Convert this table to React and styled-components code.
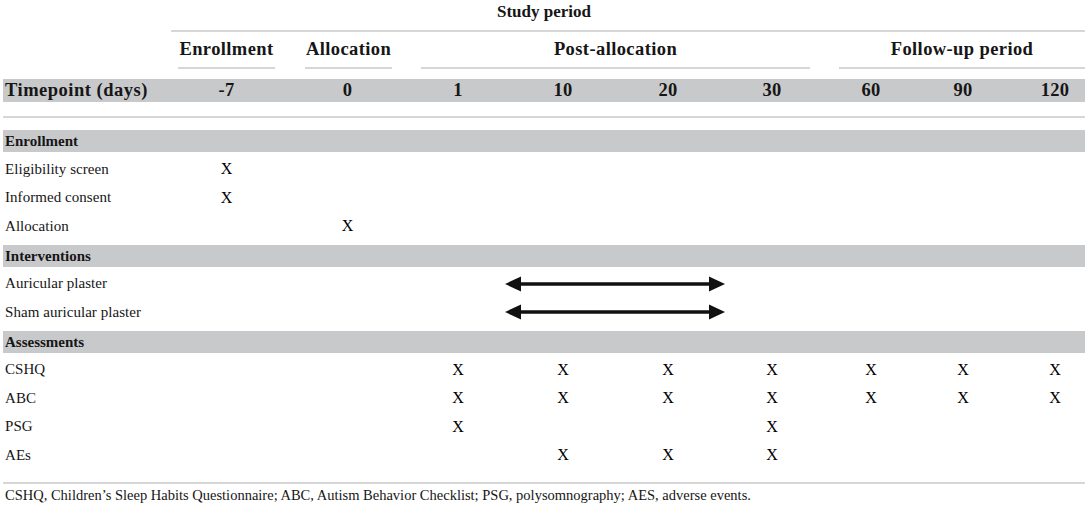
import React from 'react';
import styled, { createGlobalStyle } from 'styled-components';

const COLS = '161px 125px 117px 104px 106px 104px 104px 94px 90px 94px';

const Global = createGlobalStyle`
  html, body { margin: 0; padding: 0; background: #ffffff; }
  body {
    font-family: "Liberation Serif", "Times New Roman", serif;
    color: #161616;
  }
`;

const Page = styled.div`
  width: 1091px;
  height: 511px;
  box-sizing: border-box;
  padding: 0 6px 0 3px;
  overflow: hidden;
`;

const HeadGrid = styled.div`
  display: grid;
  grid-template-columns: ${COLS};
  grid-template-rows: 32px 37px;
`;

const StudyTitle = styled.div`
  grid-column: 1 / -1;
  grid-row: 1;
  margin-right: 17px;
  text-align: center;
  font-weight: 700;
  font-size: 17px;
  line-height: 24px;
`;

const StudyRule = styled.div`
  grid-column: 2 / -1;
  grid-row: 1;
  align-self: end;
  margin: 0 17px 0 7px;
  border-top: 2px solid #d6d6d6;
`;

const PhaseCell = styled.div`
  grid-row: 2;
  grid-column: ${(p) => p.$col};
  margin: ${(p) => p.$margin};
  border-bottom: 2px solid #d6d6d6;
  text-align: center;
  font-weight: 700;
  font-size: 18.5px;
  letter-spacing: 0.4px;
  line-height: 35px;
  white-space: nowrap;
`;

const TimeBar = styled.div`
  display: grid;
  grid-template-columns: ${COLS};
  margin-top: 10px;
  height: 23px;
  align-items: center;
  background: #c8c9cb;
  font-weight: 700;
  font-size: 18.5px;
`;

const TimeLabel = styled.div`
  padding-left: 2px;
  white-space: nowrap;
  letter-spacing: 0.5px;
`;

const TimeValue = styled.div`
  text-align: center;
  letter-spacing: 0.3px;
`;

const Rule = styled.div`
  height: 2px;
  background: #d6d6d6;
  margin-top: ${(p) => p.$top}px;
`;

const Body = styled.div`
  margin-top: 12px;
  padding-bottom: 8px;
`;

const SectionBar = styled.div`
  height: 22px;
  line-height: 22px;
  background: #c8c9cb;
  padding-left: 2px;
  font-weight: 700;
  font-size: 15px;
`;

const SectionRows = styled.div`
  padding: 3px 0 4px;
`;

const Row = styled.div`
  display: grid;
  grid-template-columns: ${COLS};
  height: 28.5px;
  align-items: center;
  font-size: 15px;
  letter-spacing: 0.05px;
`;

const RowLabel = styled.div`
  padding-left: 2px;
  white-space: nowrap;
`;

const Mark = styled.div`
  grid-column: ${(p) => p.$col + 2};
  grid-row: 1;
  text-align: center;
  font-size: 16px;
  color: #000;
`;

const ArrowCell = styled.div`
  grid-column: 4 / span 4;
  grid-row: 1;
  display: flex;
  justify-content: center;
  align-items: center;
`;

const Footnote = styled.div`
  margin-top: 2px;
  padding-left: 2px;
  font-size: 14.5px;
  line-height: 18px;
  white-space: nowrap;
`;

const TIMEPOINTS = ['-7', '0', '1', '10', '20', '30', '60', '90', '120'];

const SECTIONS = [
  {
    title: 'Enrollment',
    rows: [
      { label: 'Eligibility screen', marks: [0] },
      { label: 'Informed consent', marks: [0] },
      { label: 'Allocation', marks: [1] },
    ],
  },
  {
    title: 'Interventions',
    rows: [
      { label: 'Auricular plaster', arrow: true },
      { label: 'Sham auricular plaster', arrow: true },
    ],
  },
  {
    title: 'Assessments',
    rows: [
      { label: 'CSHQ', marks: [2, 3, 4, 5, 6, 7, 8] },
      { label: 'ABC', marks: [2, 3, 4, 5, 6, 7, 8] },
      { label: 'PSG', marks: [2, 5] },
      { label: 'AEs', marks: [3, 4, 5] },
    ],
  },
];

const Arrow = () => (
  <svg width="220" height="16" viewBox="0 0 220 16" aria-hidden="true">
    <line x1="12" y1="8" x2="208" y2="8" stroke="#111" strokeWidth="3.5" />
    <polygon points="0,8 16,0.5 16,15.5" fill="#111" />
    <polygon points="220,8 204,0.5 204,15.5" fill="#111" />
  </svg>
);

export default function App() {
  return (
    <Page>
      <Global />
      <HeadGrid>
        <StudyTitle>Study period</StudyTitle>
        <StudyRule />
        <PhaseCell $col="2" $margin="0 14px 0 14px">Enrollment</PhaseCell>
        <PhaseCell $col="3" $margin="0 14px 0 16px">Allocation</PhaseCell>
        <PhaseCell $col="4 / span 4" $margin="0 14px 0 15px">Post-allocation</PhaseCell>
        <PhaseCell $col="8 / span 3" $margin="0 17px 0 15px">Follow-up period</PhaseCell>
      </HeadGrid>
      <TimeBar>
        <TimeLabel>Timepoint (days)</TimeLabel>
        {TIMEPOINTS.map((t) => (
          <TimeValue key={t}>{t}</TimeValue>
        ))}
      </TimeBar>
      <Rule $top={14} />
      <Body>
        {SECTIONS.map((s) => (
          <div key={s.title}>
            <SectionBar>{s.title}</SectionBar>
            <SectionRows>
              {s.rows.map((r) => (
                <Row key={r.label}>
                  <RowLabel>{r.label}</RowLabel>
                  {r.arrow && (
                    <ArrowCell>
                      <Arrow />
                    </ArrowCell>
                  )}
                  {(r.marks || []).map((c) => (
                    <Mark key={c} $col={c}>X</Mark>
                  ))}
                </Row>
              ))}
            </SectionRows>
          </div>
        ))}
      </Body>
      <Rule $top={0} />
      <Footnote>
        CSHQ, Children’s Sleep Habits Questionnaire; ABC, Autism Behavior Checklist; PSG, polysomnography; AES, adverse events.
      </Footnote>
    </Page>
  );
}
